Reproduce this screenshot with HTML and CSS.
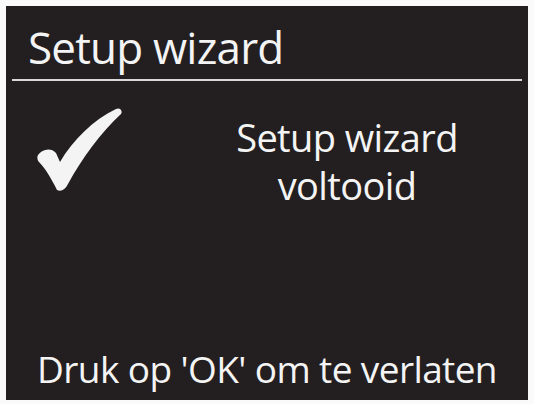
FILE: index.html
```html
<!DOCTYPE html>
<html lang="nl">
<head>
    <meta charset="UTF-8">
    <meta name="viewport" content="width=device-width, initial-scale=1.0">
    <title>Setup wizard</title>
    <link rel="stylesheet" href="styles.css">
</head>
<body>
    <div class="screen">
        <header class="title-bar">
            <h1>Setup wizard</h1>
        </header>
        <div class="divider"></div>

        <div class="status">
            <div class="status-icon">
                <svg width="86" height="84" viewBox="0 0 86 84">
                    <path d="M1,47 C5,41 14,39 19,45 L23,54 C36,32 56,12 79,1 C83,-1 86,3 84,6 C64,24 44,52 31,76 C28,82 24,84 20,82 C14,70 8,60 2,54 C0,52 0,49 1,47 Z" fill="#f4f4f4"/>
                </svg>
            </div>
            <div class="status-text">Setup wizard<br>voltooid</div>
        </div>

        <div class="hint">Druk op 'OK' om te verlaten</div>
    </div>
</body>
</html>
```

FILE: styles.css
```css
* {
    box-sizing: border-box;
    margin: 0;
    padding: 0;
}
body {
    background-color: #fafafa;
    font-family: "Open Sans", "Noto Sans", sans-serif;
    color: #f4f4f4;
}
.screen {
    width: 522px;
    height: 394px;
    margin: 6px;
    background-color: #231f20;
    display: flex;
    flex-direction: column;
}
.title-bar {
    padding: 19px 0 0 22px;
    height: 73px;
}
h1 {
    font-size: 44px;
    font-weight: 500;
    line-height: 1;
    letter-spacing: -0.8px;
}
.divider {
    height: 2px;
    margin: 0 6px;
    background-color: #d8d8d8;
}
.status {
    display: flex;
    align-items: flex-start;
    padding-top: 27px;
}
.status-icon {
    width: 160px;
    padding-left: 31px;
}
.status-text {
    flex: 1;
    text-align: center;
    font-size: 38px;
    font-weight: 500;
    line-height: 48px;
    letter-spacing: -0.6px;
    padding-top: 5px;
}
.hint {
    margin-top: auto;
    padding-bottom: 7px;
    text-align: center;
    font-size: 37px;
    font-weight: 500;
    line-height: 48px;
    letter-spacing: -0.6px;
}
```
